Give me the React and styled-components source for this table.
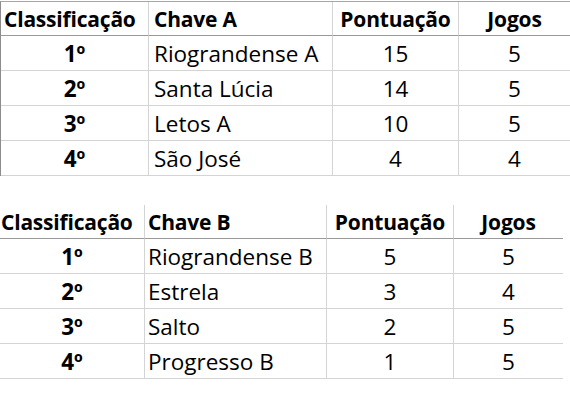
import React from "react"
import styled, { createGlobalStyle } from "styled-components"

const chaveA = [
  ["1º", "Riograndense A", "15", "5"],
  ["2º", "Santa Lúcia", "14", "5"],
  ["3º", "Letos A", "10", "5"],
  ["4º", "São José", "4", "4"],
]

const chaveB = [
  ["1º", "Riograndense B", "5", "5"],
  ["2º", "Estrela", "3", "4"],
  ["3º", "Salto", "2", "5"],
  ["4º", "Progresso B", "1", "5"],
]

function Standings({ title, rows, cols, leftEdge, topEdge, firstPad, namePad }) {
  return (
    <Sheet cols={cols} leftEdge={leftEdge} topEdge={topEdge}>
      <HeadCell pad={firstPad}>Classificação</HeadCell>
      <HeadCell pad={namePad}>{title}</HeadCell>
      <HeadCell center>Pontuação</HeadCell>
      <HeadCell center last>Jogos</HeadCell>
      {rows.map(r => (
        <React.Fragment key={r[0]}>
          <Cell center bold>{r[0]}</Cell>
          <Cell pad={namePad}>{r[1]}</Cell>
          <Cell center>{r[2]}</Cell>
          <Cell center last>{r[3]}</Cell>
        </React.Fragment>
      ))}
    </Sheet>
  )
}

export default function App() {
  return (
    <>
      <GlobalStyle />
      <Page>
        <Standings
          title="Chave A"
          rows={chaveA}
          cols="148px 184px 126px 111px"
          leftEdge
          topEdge
          firstPad={3}
          namePad={5}
        />
        <Standings
          title="Chave B"
          rows={chaveB}
          cols="145px 182px 127px 109px"
          firstPad={1}
          namePad={3}
        />
      </Page>
    </>
  )
}

//Styled components begin here!

const GlobalStyle = createGlobalStyle`
  body {
    margin: 0;
    background: #ffffff;
    font-family: "Open Sans", "Noto Sans", sans-serif;
    color: #000;
  }
`

const Page = styled.div`
  display: flex;
  flex-direction: column;
  gap: 29px;
  padding-top: 1px;
  width: 570px;
`

const Sheet = styled.div`
  display: grid;
  grid-template-columns: ${p => p.cols};
  grid-auto-rows: 35px;
  grid-template-rows: 34px;
  border-left: ${p => (p.leftEdge ? "1px solid #8c8c8c" : "none")};
  border-top: ${p => (p.topEdge ? "1px solid #a6a6a6" : "none")};
  width: max-content;
`

const Cell = styled.div`
  box-sizing: border-box;
  display: flex;
  align-items: flex-end;
  justify-content: ${p => (p.center ? "center" : "flex-start")};
  padding-left: ${p => (p.pad ? p.pad + "px" : "0")};
  border-right: ${p => (p.last ? "none" : "1px solid #d4d4d4")};
  border-bottom: 1px solid #d4d4d4;
  font-size: 22.5px;
  font-weight: ${p => (p.bold ? 700 : 400)};
  line-height: 1.36;
  white-space: nowrap;
`

const HeadCell = styled(Cell)`
  font-size: 21px;
  font-weight: 700;
  letter-spacing: -0.2px;
  padding-bottom: 1px;
  border-bottom-color: #9a9a9a;
`
